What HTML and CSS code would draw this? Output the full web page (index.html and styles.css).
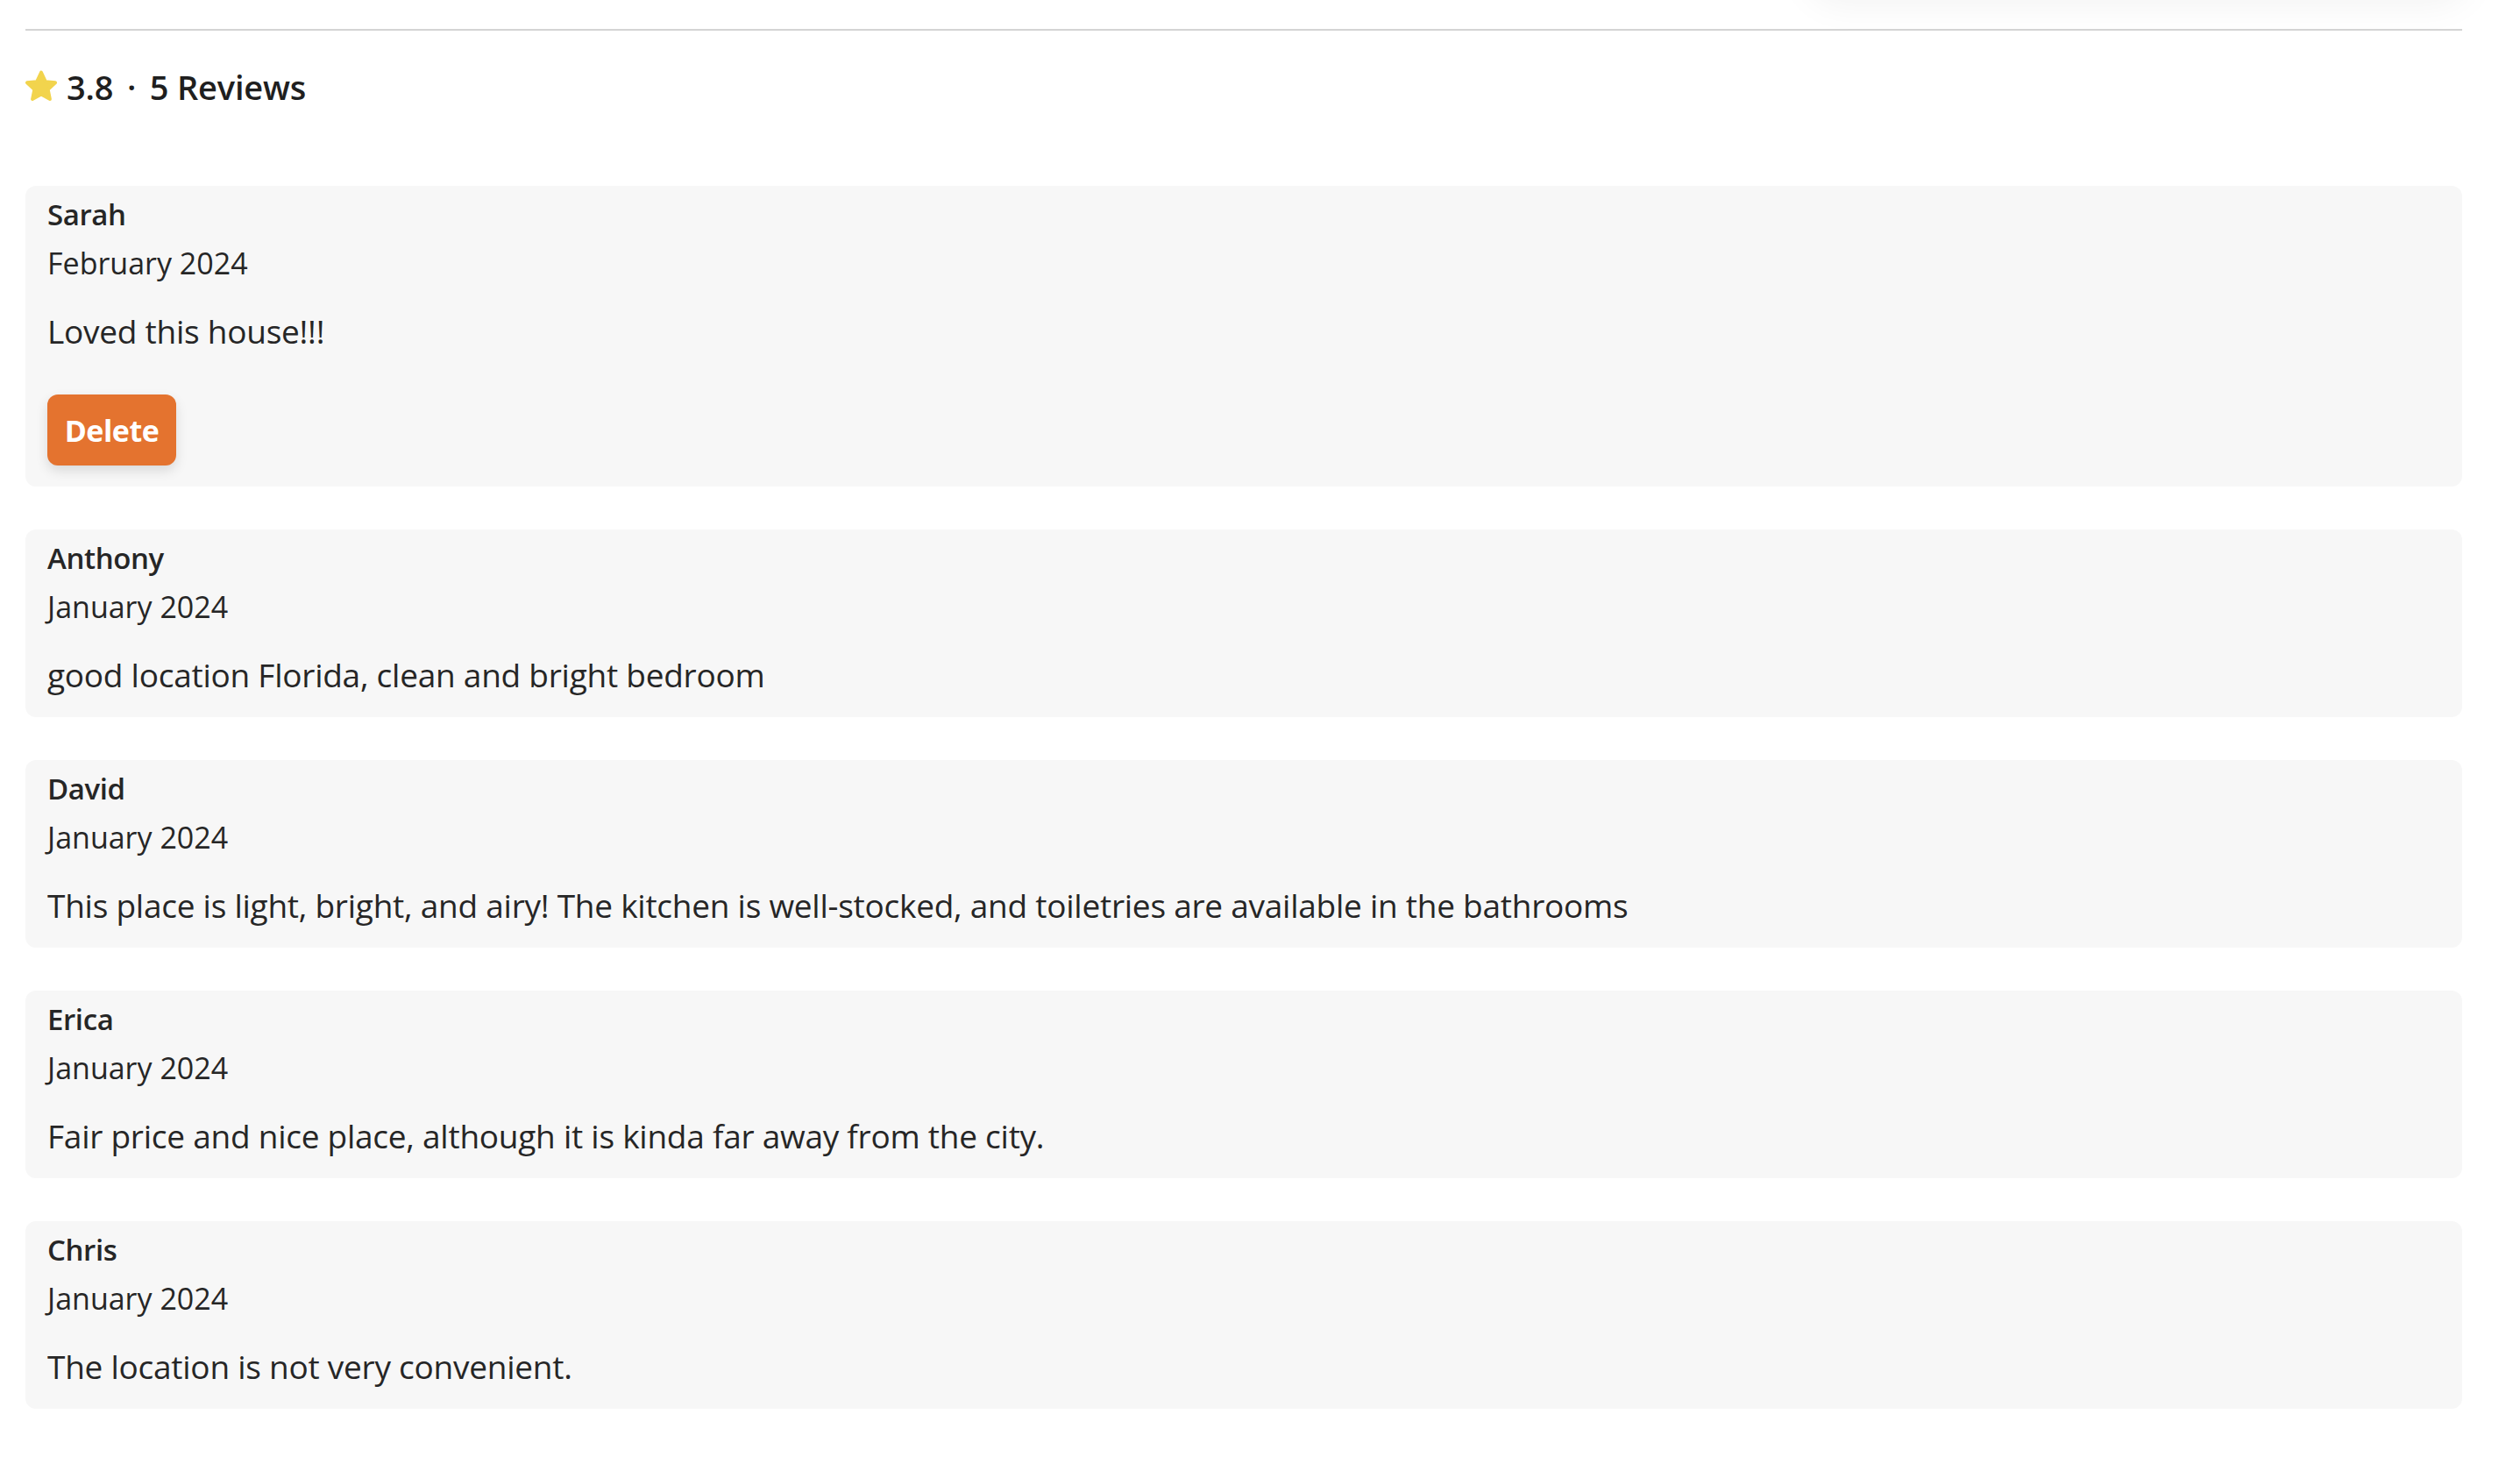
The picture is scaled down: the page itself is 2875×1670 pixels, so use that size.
FILE: index.html
```html
<!DOCTYPE html>
<html lang="en">
<head>
<meta charset="utf-8">
<title>Reviews</title>
<link rel="stylesheet" href="styles.css">
</head>
<body>
<div class="top-shadow"></div>
<main class="reviews">
  <hr class="divider">
  <h2 class="summary">
    <svg class="star" viewBox="0 0 24 24" aria-hidden="true"><path d="M12 2.6l2.8 6 6.4.7-4.8 4.4 1.3 6.4L12 16.9 6.3 20.1l1.3-6.4-4.8-4.4 6.4-.7z"/></svg>
    <span>3.8 <span class="dot">·</span> 5 Reviews</span>
  </h2>
  <div class="list">
    <article class="card">
      <h3 class="name">Sarah</h3>
      <p class="date">February 2024</p>
      <p class="comment">Loved this house!!!</p>
      <button class="delete">Delete</button>
    </article>
    <article class="card">
      <h3 class="name">Anthony</h3>
      <p class="date">January 2024</p>
      <p class="comment">good location Florida, clean and bright bedroom</p>
    </article>
    <article class="card">
      <h3 class="name">David</h3>
      <p class="date">January 2024</p>
      <p class="comment">This place is light, bright, and airy! The kitchen is well-stocked, and toiletries are available in the bathrooms</p>
    </article>
    <article class="card">
      <h3 class="name">Erica</h3>
      <p class="date">January 2024</p>
      <p class="comment">Fair price and nice place, although it is kinda far away from the city.</p>
    </article>
    <article class="card">
      <h3 class="name">Chris</h3>
      <p class="date">January 2024</p>
      <p class="comment">The location is not very convenient.</p>
    </article>
  </div>
</main>
</body>
</html>
```

FILE: styles.css
```css
html, body {
  margin: 0;
  padding: 0;
  background: #ffffff;
}

body {
  font-family: "Open Sans", "Noto Sans", sans-serif;
  color: #222222;
  position: relative;
  overflow: hidden;
}

.top-shadow {
  position: absolute;
  top: -120px;
  left: 2060px;
  width: 760px;
  height: 120px;
  border-radius: 40px;
  box-shadow: 0 6px 40px rgba(0, 0, 0, 0.05);
}

.reviews {
  margin: 0 66px 0 29px;
  padding-top: 33px;
  padding-bottom: 60px;
}

.divider {
  margin: 0;
  border: 0;
  height: 2px;
  background: #d4d4d4;
}

.summary {
  display: flex;
  align-items: center;
  gap: 8px;
  margin: 34px 0 0;
  font-size: 38px;
  line-height: 60px;
  font-weight: 600;
  letter-spacing: -0.2px;
  color: #1f1f1f;
}

.dot {
  margin: 0 6px;
}

.star {
  width: 42px;
  height: 42px;
  flex: none;
  margin-left: -3px;
}

.star path {
  fill: #f2d44d;
  stroke: #f2d44d;
  stroke-width: 2.2;
  stroke-linejoin: round;
}

.list {
  display: flex;
  flex-direction: column;
  gap: 49px;
  margin-top: 83px;
}

.card {
  background: #f7f7f7;
  border-radius: 12px;
  padding: 13px 25px 20px;
}

.name {
  margin: 0;
  font-size: 33px;
  line-height: 40px;
  font-weight: 600;
  letter-spacing: -0.4px;
  color: #262626;
}

.date {
  margin: 11px 0 0;
  font-size: 34px;
  line-height: 48px;
  color: #262626;
}

.comment {
  margin: 26px 0 0;
  font-size: 37px;
  line-height: 56px;
  letter-spacing: -0.25px;
  color: #262626;
}

.delete {
  display: block;
  margin: 44px 0 4px;
  width: 147px;
  height: 81px;
  padding: 0;
  border: 0;
  border-radius: 12px;
  background: #e4732f;
  color: #ffffff;
  font-family: inherit;
  font-size: 34px;
  font-weight: 700;
  letter-spacing: -0.5px;
  box-shadow: 0 6px 14px rgba(0, 0, 0, 0.12);
}
```
